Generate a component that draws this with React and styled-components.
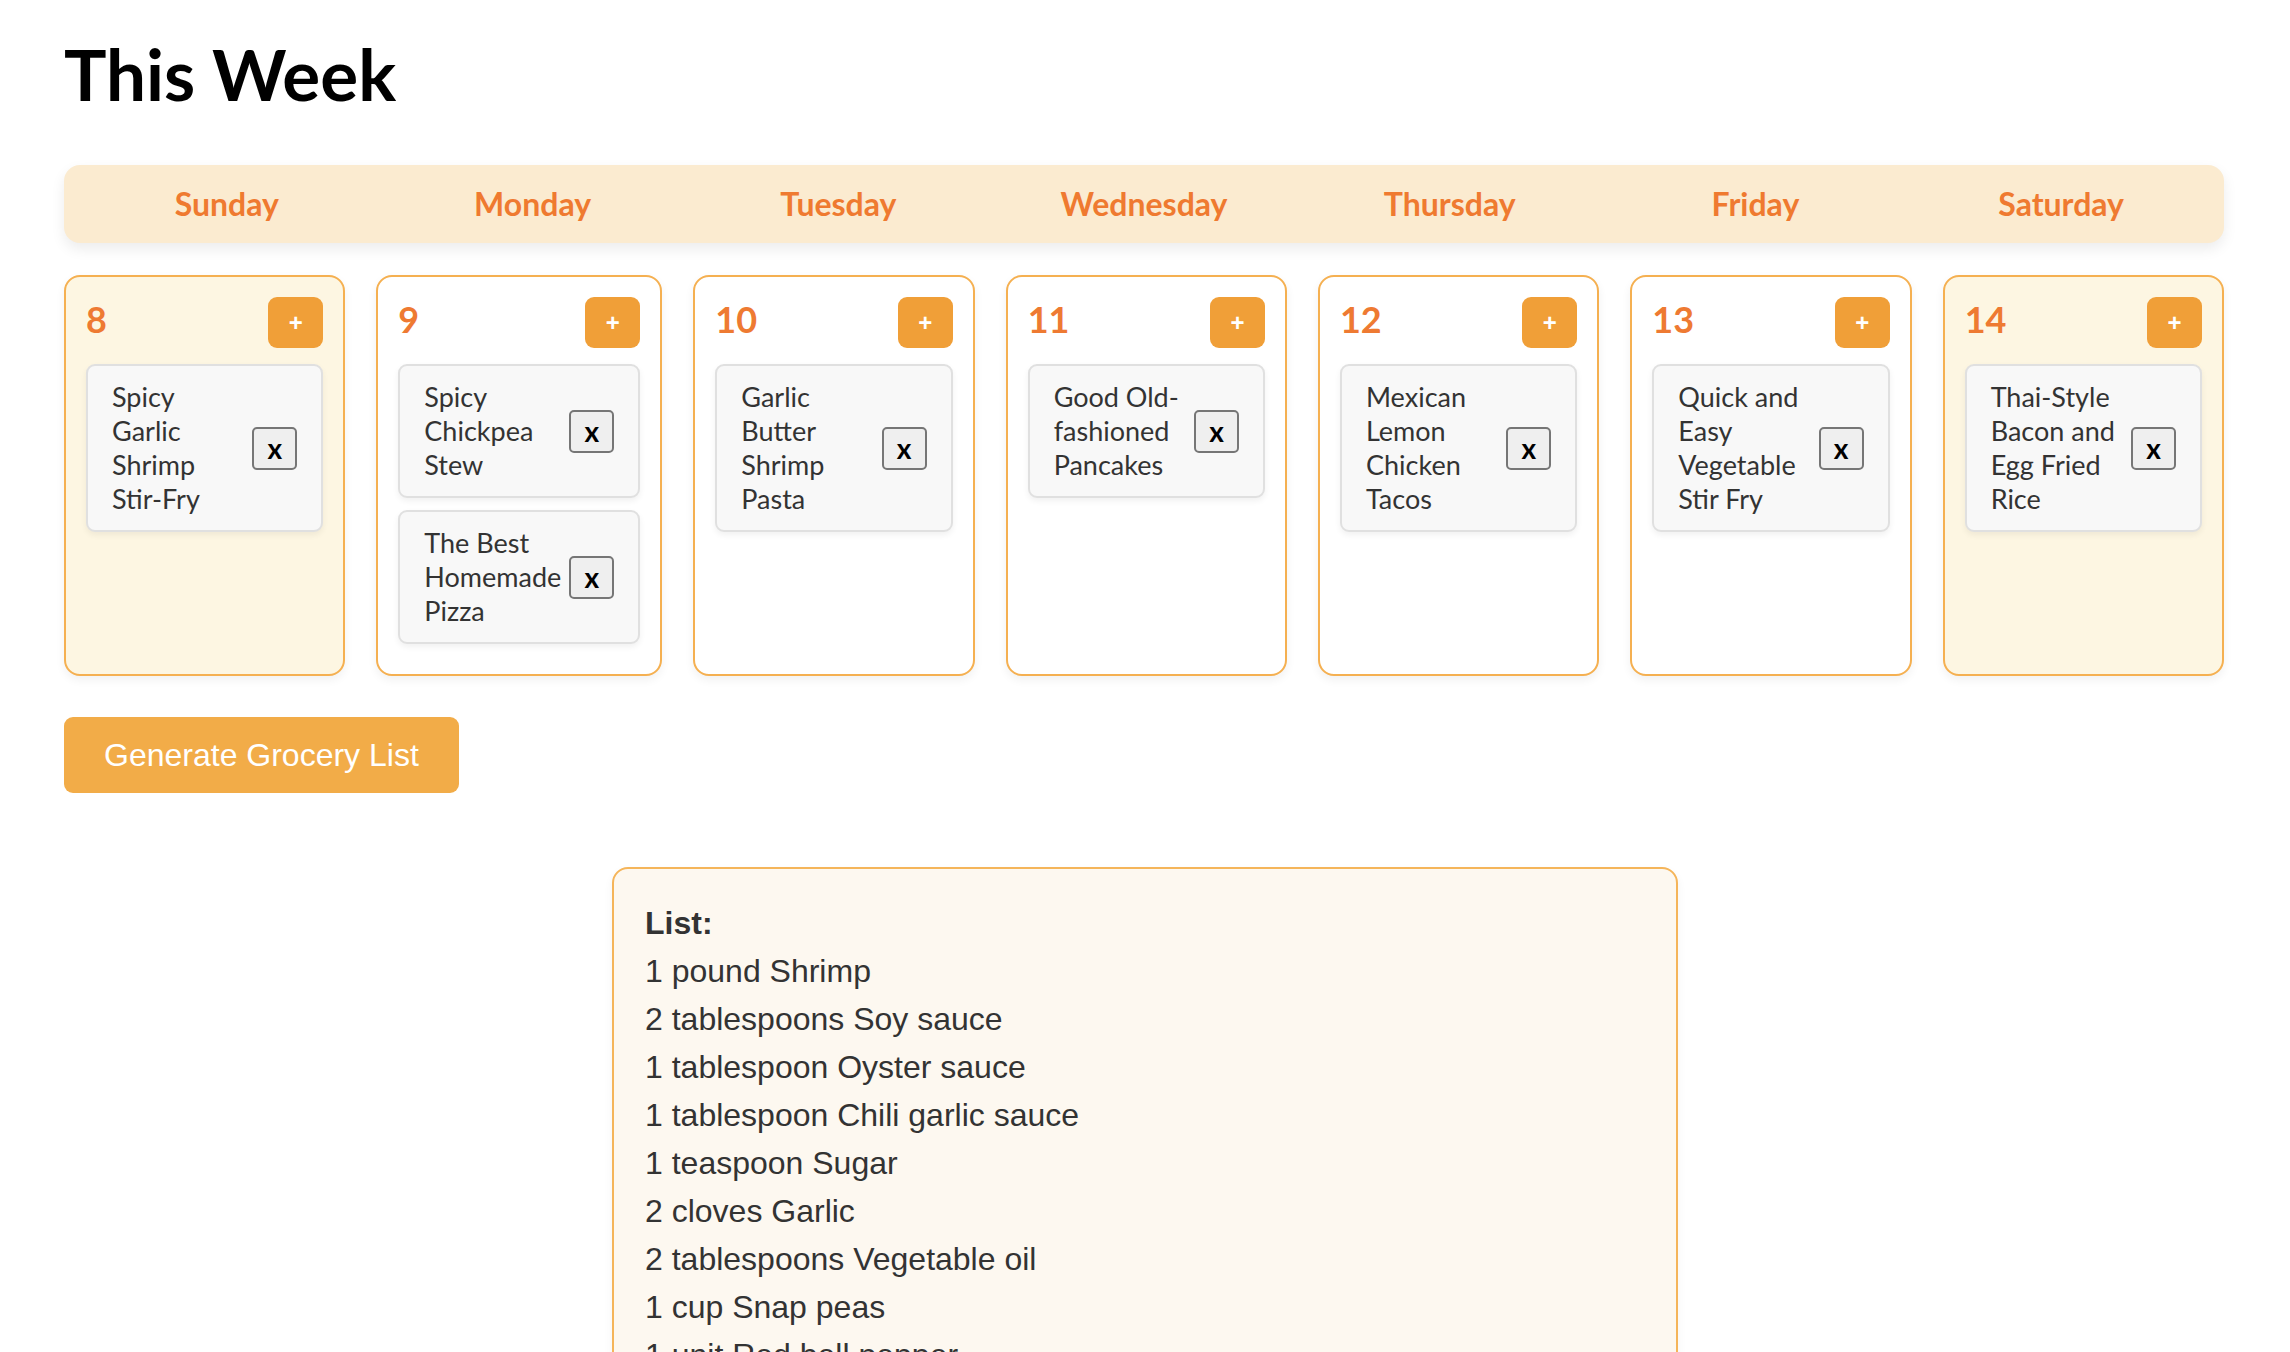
import React from 'react'
import styled, { createGlobalStyle } from 'styled-components'

const GlobalStyle = createGlobalStyle`
    body {
        margin: 0;
        background: #fff;
        font-family: Lato, "Liberation Sans", sans-serif;
    }
    * {
        box-sizing: border-box;
    }
`

const days = ['Sunday', 'Monday', 'Tuesday', 'Wednesday', 'Thursday', 'Friday', 'Saturday']

const week = [
    { date: 8, weekend: true, meals: ['Spicy Garlic Shrimp Stir-Fry'] },
    { date: 9, meals: ['Spicy Chickpea Stew', 'The Best Homemade Pizza'] },
    { date: 10, meals: ['Garlic Butter Shrimp Pasta'] },
    { date: 11, meals: ['Good Old-fashioned Pancakes'] },
    { date: 12, meals: ['Mexican Lemon Chicken Tacos'] },
    { date: 13, meals: ['Quick and Easy Vegetable Stir Fry'] },
    { date: 14, weekend: true, meals: ['Thai-Style Bacon and Egg Fried Rice'] },
]

const groceries = [
    '1 pound Shrimp',
    '2 tablespoons Soy sauce',
    '1 tablespoon Oyster sauce',
    '1 tablespoon Chili garlic sauce',
    '1 teaspoon Sugar',
    '2 cloves Garlic',
    '2 tablespoons Vegetable oil',
    '1 cup Snap peas',
    '1 unit Red bell pepper',
    '2 units Green onions',
]

const App = () => {
    return (
        <Page>
            <GlobalStyle />
            <Title>This Week</Title>
            <DayBar>
                {days.map(d => (
                    <DayName key={d}>{d}</DayName>
                ))}
            </DayBar>
            <Week>
                {week.map(day => (
                    <DayCard key={day.date} $weekend={day.weekend}>
                        <CardHead>
                            <DateNum>{day.date}</DateNum>
                            <AddButton>+</AddButton>
                        </CardHead>
                        <Meals>
                            {day.meals.map(m => (
                                <Meal key={m}>
                                    <MealName>{m}</MealName>
                                    <RemoveButton>x</RemoveButton>
                                </Meal>
                            ))}
                        </Meals>
                    </DayCard>
                ))}
            </Week>
            <GenerateButton>Generate Grocery List</GenerateButton>
            <ListBox>
                <ListTitle>List:</ListTitle>
                {groceries.map(g => (
                    <ListItem key={g}>{g}</ListItem>
                ))}
            </ListBox>
        </Page>
    )
}

const Page = styled.div`
    padding: 31px 66px 60px 64px;
    display: flex;
    flex-direction: column;
`
const Title = styled.h1`
    margin: 0;
    font-family: Lato, sans-serif;
    font-weight: 700;
    font-size: 71px;
    line-height: 1.2;
    color: #000;
`
const DayBar = styled.div`
    margin-top: 49px;
    display: grid;
    grid-template-columns: repeat(7, 1fr);
    padding: 20px 10px;
    background: #fbebd0;
    border-radius: 16px;
    box-shadow: 0 6px 14px rgba(0, 0, 0, 0.08);
`
const DayName = styled.div`
    text-align: center;
    font-family: Lato, sans-serif;
    font-weight: 700;
    font-size: 32px;
    line-height: 38px;
    color: #ef7a30;
`
const Week = styled.div`
    margin-top: 32px;
    display: grid;
    grid-template-columns: repeat(7, 1fr);
    gap: 31px;
`
const DayCard = styled.div`
    min-height: 401px;
    padding: 20px;
    border: 2px solid #f5b051;
    border-radius: 16px;
    background: ${p => (p.$weekend ? '#fdf6e2' : '#ffffff')};
    box-shadow: 0 4px 10px rgba(0, 0, 0, 0.06);
`
const CardHead = styled.div`
    display: flex;
    align-items: center;
    justify-content: space-between;
`
const DateNum = styled.span`
    font-family: Lato, sans-serif;
    font-weight: 700;
    font-size: 36px;
    color: #ee7a32;
    margin-top: -8px;
`
const AddButton = styled.button`
    width: 55px;
    height: 51px;
    border: none;
    border-radius: 9px;
    background: #f09f38;
    color: #fff;
    font-family: "Liberation Sans", sans-serif;
    font-weight: 700;
    font-size: 24px;
    padding: 0;
    cursor: pointer;
`
const Meals = styled.div`
    margin-top: 16px;
    display: flex;
    flex-direction: column;
    gap: 12px;
`
const Meal = styled.div`
    display: flex;
    align-items: center;
    padding: 14px 24px;
    background: #f8f8f8;
    border: 2px solid #e0e0e0;
    border-radius: 9px;
    box-shadow: 0 3px 6px rgba(0, 0, 0, 0.06);
`
const MealName = styled.span`
    flex: 1;
    min-width: 0;
    margin-right: 8px;
    font-family: Lato, sans-serif;
    font-size: 27px;
    line-height: 34px;
    color: #333;
`
const RemoveButton = styled.button`
    flex: none;
    width: 45px;
    height: 43px;
    padding: 0;
    background: #efefef;
    border: 2px solid #767676;
    border-radius: 5px;
    font-family: Lato, sans-serif;
    font-weight: 700;
    font-size: 28px;
    line-height: 1;
    color: #000;
    cursor: pointer;
`
const GenerateButton = styled.button`
    align-self: flex-start;
    margin-top: 41px;
    height: 76px;
    padding: 0 40px;
    border: none;
    border-radius: 9px;
    background: #f2ac48;
    color: #fff;
    font-family: "Liberation Sans", Arial, sans-serif;
    font-size: 32px;
    cursor: pointer;
`
const ListBox = styled.div`
    align-self: center;
    margin: 74px 0 0 2px;
    width: 1066px;
    padding: 30px 31px;
    background: #fdf8f0;
    border: 2px solid #f5b55a;
    border-radius: 16px;
    box-shadow: 0 4px 10px rgba(0, 0, 0, 0.05);
    font-family: "Liberation Sans", Arial, sans-serif;
    font-size: 32px;
    line-height: 48px;
    color: #333;
`
const ListTitle = styled.div`
    font-weight: 700;
`
const ListItem = styled.div`
`

export default App
